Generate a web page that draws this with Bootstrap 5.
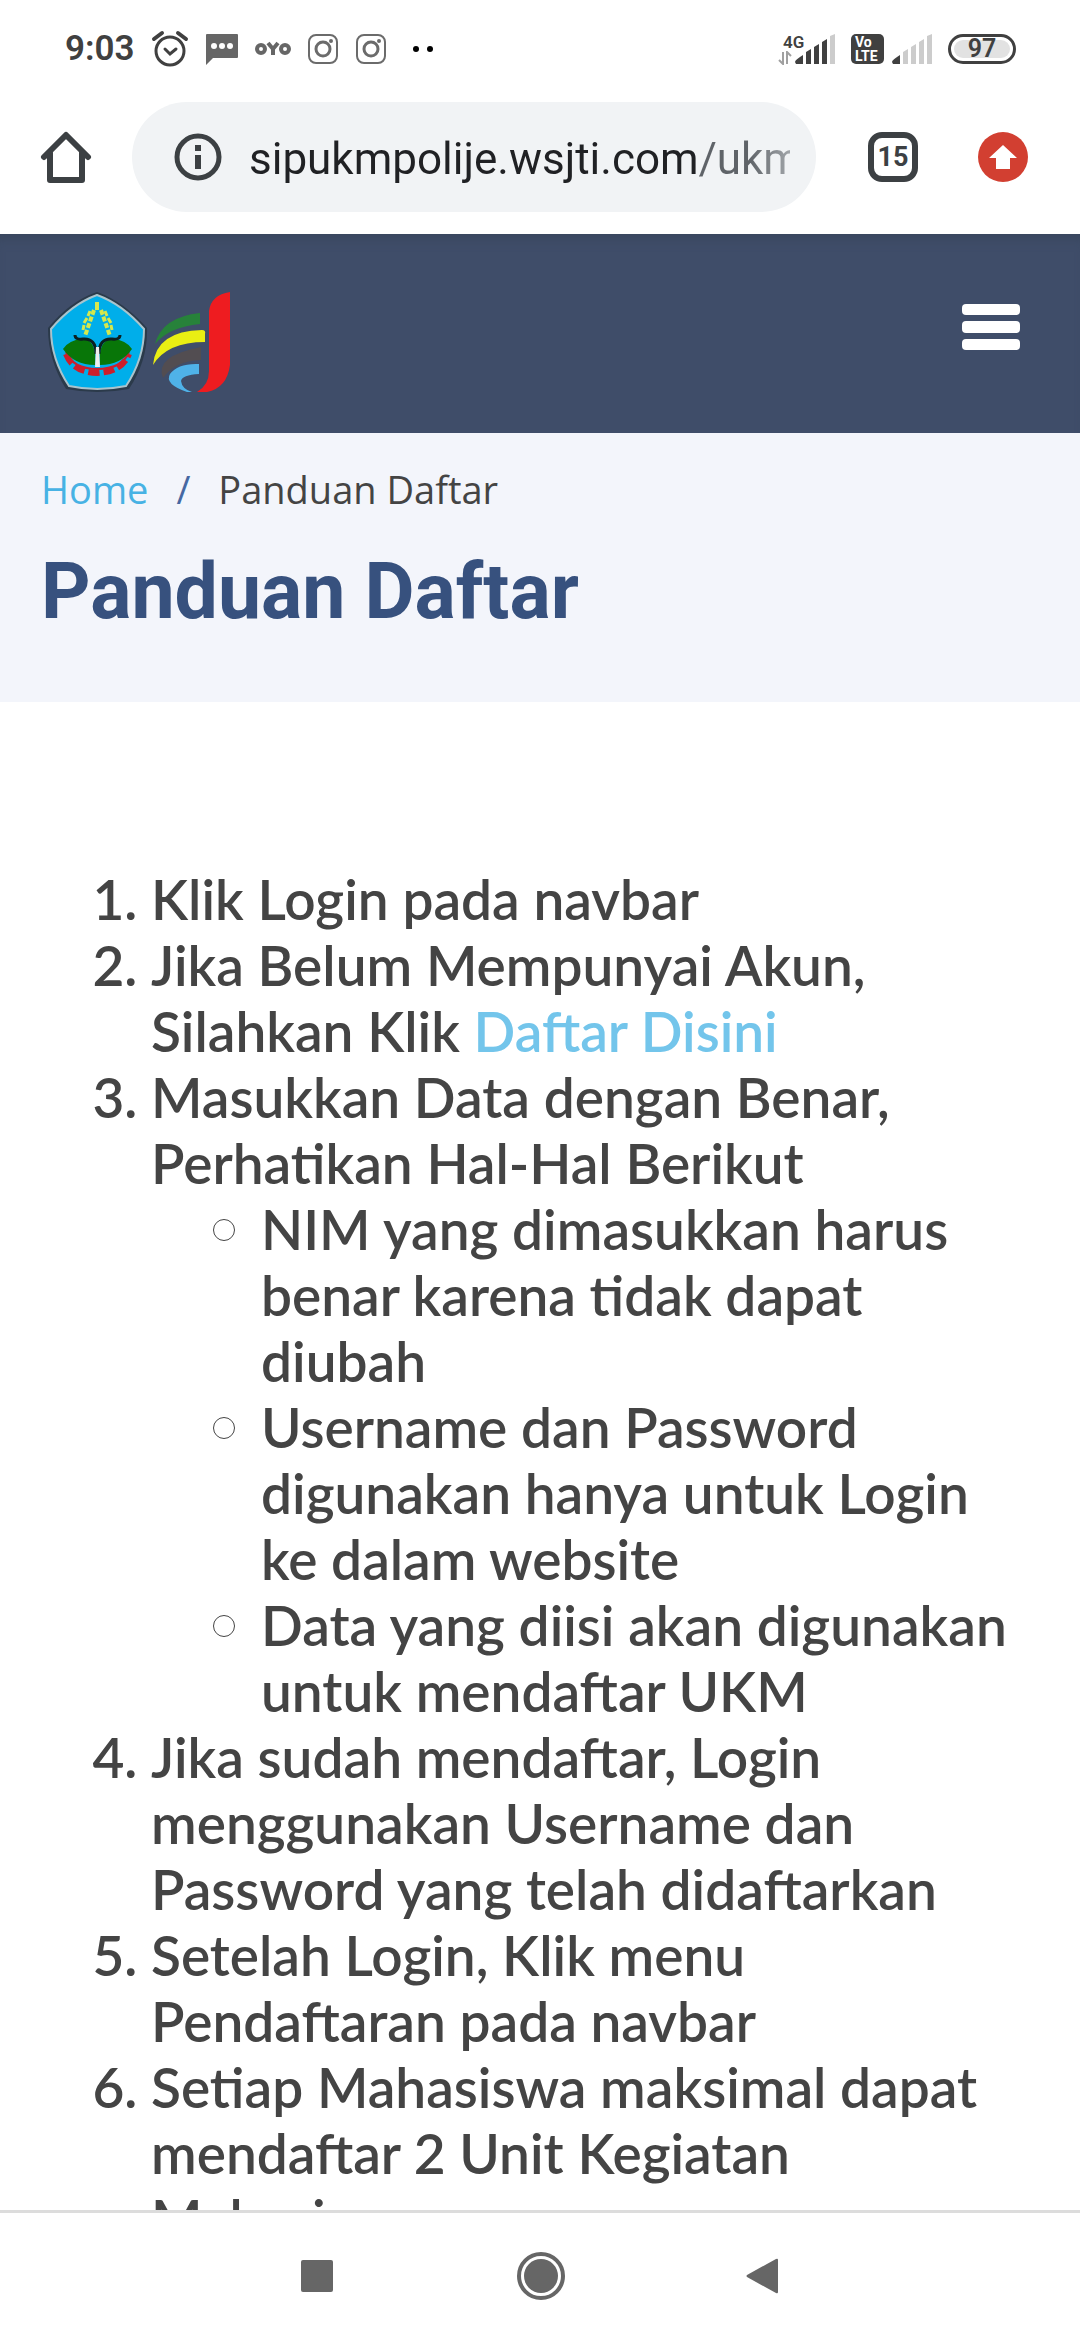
<!DOCTYPE html>
<html lang="id">
<head>
<meta charset="utf-8">
<meta name="viewport" content="width=device-width, initial-scale=1">
<title>Panduan Daftar</title>
<link rel="stylesheet" href="https://cdn.jsdelivr.net/npm/bootstrap@5.3.0/dist/css/bootstrap.min.css">
<style>
  body { background: #fff; color: #444; font-family: Roboto, "Liberation Sans", sans-serif; }
  svg { display: block; flex: none; }

  .status-bar { height: 98px; padding: 0 64px 0 65px; color: #404040; }
  .clock { font-size: 35px; line-height: 40px; font-weight: 600; }
  .net-label { font-size: 17px; line-height: 17px; font-weight: 600; margin-left: 5px; }
  .net-type { width: 17px; }
  .battery { width: 68px; height: 30px; border: 3px solid #404040; border-radius: 15px; padding: 3px; }
  .battery-level { background: #e2e2e2; border-radius: 9px; font-size: 25px; line-height: 18px; font-weight: 600; }

  .toolbar { padding: 4px 52px 22px 40px; }
  .tool-btn { background: none; border: 0; padding: 0; flex: none; }
  .address { height: 110px; border-radius: 55px; background: #f1f3f5; padding: 0 26px 0 42px; margin: 0 52px 0 40px; gap: 27px; min-width: 0; }
  .address input {
    border: 0; padding: 4px 0 0; outline: 0; width: 100%; min-width: 0; font-size: 44px; line-height: 56px; height: 64px;
    color: transparent; -webkit-background-clip: text; background-clip: text;
    background-image: linear-gradient(90deg, #202124 451px, #5f6368 451px, #5f6368 500px, #a0a4a8 540px);
  }
  .tabs-btn { width: 50px; height: 50px; border: 6px solid #3c4043; border-radius: 14px; color: #3c4043; font-size: 27px; line-height: 38px; font-weight: 700; margin-right: 60px; }

  .site-nav { background: #3f4d69; padding: 58px 60px 41px 48px; box-shadow: inset 0 12px 12px -8px #38455c; }
  .site-nav .menu-btn { margin-top: 12px; }
  .page-head { background: #f3f5fb; padding: 27px 41px 64px; }
  .crumbs { font-family: "Open Sans", sans-serif; font-size: 38px; line-height: 58px; --bs-breadcrumb-divider-color: #4668a2; --bs-breadcrumb-item-padding-x: 28px; --bs-breadcrumb-item-active-color: #444; --bs-breadcrumb-margin-bottom: 0; }
  .crumbs a { color: #47b2e4; text-decoration: none; }
  .page-head h1 { color: #37517e; font-size: 77px; line-height: 92px; font-weight: 700; margin: 28px 0 0; }

  .guide { padding: 164px 0 0 41px; }
  .guide ol, .guide ul { padding-left: 110px; margin: 0; }
  .guide > ol { font-family: Lato, sans-serif; font-size: 55px; line-height: 66px; font-weight: 600; }
  .guide a { color: #73c5eb; text-decoration: none; }
  .guide ul { list-style: none; }
  .guide ul > li::before { content: ""; float: left; width: 22px; height: 22px; margin: 23px 0 0 -48px; border: 1px solid #444; border-radius: 50%; }

  .sys-nav { height: 130px; border-top: 3px solid #dcdcdc; padding: 0 2px 2px 0; }
  .home-btn { margin: 0 180px 0 183px; }
</style>
</head>
<body>
<div class="vh-100 d-flex flex-column overflow-hidden">
  <header class="flex-shrink-0">
    <div class="status-bar d-flex align-items-center justify-content-between">
      <div class="d-flex align-items-center">
        <span class="clock">9:03</span>
        <svg class="ms-3" width="38" height="38" viewBox="0 0 38 38" fill="none" stroke="#404040" stroke-width="3" stroke-linecap="round"><circle cx="19" cy="21" r="14"/><path d="M3 9l8-6M35 9l-8-6" stroke-width="4"/><path d="M14 19l5 5 6-5"/></svg>
        <svg class="ms-3" width="34" height="34" viewBox="0 0 34 34"><path d="M2 2h30q1 0 1 1v22q0 1-1 1H8l-7 7V3q0-1 1-1z" fill="#666"/><g fill="#fff"><circle cx="9" cy="14" r="3"/><circle cx="17" cy="14" r="3"/><circle cx="25" cy="14" r="3"/></g></svg>
        <svg class="ms-3" width="36" height="16" viewBox="0 0 36 16" fill="none" stroke="#666" stroke-width="4"><circle cx="6" cy="8" r="4"/><circle cx="30" cy="8" r="4"/><path d="M13 2l5 6 5-6M18 7v7"/></svg>
        <svg class="ms-3" width="32" height="32" viewBox="0 0 32 32" fill="none" stroke="#6b6b6b" stroke-width="2"><rect x="2" y="2" width="28" height="28" rx="7"/><circle cx="16" cy="16" r="7" stroke-width="3"/><circle cx="24" cy="8" r="1"/></svg>
        <svg class="ms-3" width="32" height="32" viewBox="0 0 32 32" fill="none" stroke="#6b6b6b" stroke-width="2"><rect x="2" y="2" width="28" height="28" rx="7"/><circle cx="16" cy="16" r="7" stroke-width="3"/><circle cx="24" cy="8" r="1"/></svg>
        <svg class="ms-4" width="28" height="10" viewBox="0 0 28 10"><circle cx="5" cy="5" r="3"/><circle cx="19" cy="5" r="3"/></svg>
      </div>
      <div class="d-flex align-items-center">
        <div class="net-type d-flex flex-column">
          <span class="net-label">4G</span>
          <svg width="14" height="14" viewBox="0 0 14 14" fill="none" stroke="#a0a0a0" stroke-width="2"><path d="M5 1v12L1 9M9 13V1l4 4"/></svg>
        </div>
        <svg width="40" height="30" viewBox="0 0 40 30" fill="#404040"><path d="M0 28q0-2 8-7v9H1zM11 18l5-3v15h-5zM19 13l5-3v20h-5zM27 8l5-3v25h-5z"/><path fill="#ccc" d="M35 2l5-2v30h-5z"/></svg>
        <svg class="ms-3 me-2" width="33" height="30" viewBox="0 0 33 30"><rect width="33" height="30" rx="5" fill="#404040"/><text x="4" y="13" font-size="14" font-weight="700" fill="#fff" font-family="Roboto">Vo</text><text x="4" y="27" font-size="14" font-weight="700" fill="#fff" font-family="Roboto">LTE</text></svg>
        <svg width="40" height="30" viewBox="0 0 40 30" fill="#ccc"><path fill="#404040" d="M0 28q0-2 8-7v9H1z"/><path d="M11 18l5-3v15h-5zM19 13l5-3v20h-5zM27 8l5-3v25h-5zM35 2l5-2v30h-5z"/></svg>
        <div class="battery ms-3"><div class="battery-level text-center">97</div></div>
      </div>
    </div>

    <div class="toolbar d-flex align-items-center">
      <button class="tool-btn" type="button" aria-label="Home"><svg width="52" height="52" viewBox="0 0 52 52" fill="none" stroke="#3c4043" stroke-width="6" stroke-linecap="round" stroke-linejoin="round"><path d="M4 26L26 4l22 22"/><path d="M10 22v27h32V22"/></svg></button>
      <div class="address d-flex align-items-center flex-grow-1">
        <svg width="48" height="48" viewBox="0 0 48 48"><circle cx="24" cy="24" r="21" fill="none" stroke="#3c4043" stroke-width="5"/><path fill="#3c4043" d="M21 12h6v6h-6zM21 22h6v14h-6z"/></svg>
        <input type="text" aria-label="Address" value="sipukmpolije.wsjti.com/ukm">
      </div>
      <button class="tool-btn tabs-btn" type="button" aria-label="15 tabs">15</button>
      <button class="tool-btn" type="button" aria-label="Update"><svg width="50" height="50" viewBox="0 0 50 50"><circle cx="25" cy="25" r="25" fill="#d23f31"/><path fill="#fff" d="M25 13l14 13h-7v11H18V26h-7z"/></svg></button>
    </div>
  </header>

  <main class="flex-grow-1 overflow-hidden">
    <nav class="site-nav d-flex justify-content-between align-items-start">
      <a href="#" aria-label="Beranda">
        <svg width="184" height="100" viewBox="0 0 184 100">
          <path d="M49 0Q75 9 99 36Q100 68 81 97Q49 103 18 97Q0 68 0 36Q22 9 49 0z" fill="#2b3a4a"/>
          <path d="M49 3Q74 12 96 37Q96 67 78 94Q49 100 21 94Q3 67 3 37Q24 12 49 3z" fill="#00aeea" stroke="#a9c4cd" stroke-width="2"/>
          <path d="M49 10v8" stroke="#d5e84d" stroke-width="4"/>
          <path d="M46 18l-9 26M53 18l9 26" stroke="#d5e84d" stroke-width="4" stroke-dasharray="5 2" fill="none"/>
          <path d="M42 19l-2 5M39 26l-3 5M36 33l-1 5M57 19l2 5M60 26l3 5M63 33l1 5" stroke="#d5e84d" stroke-width="3"/>
          <path d="M18 62Q25 80 49 81Q74 80 81 62" fill="none" stroke="#cc1e2b" stroke-width="6" stroke-dasharray="11 4"/>
          <path d="M18 60Q25 77 49 77Q74 77 81 60" fill="none" stroke="#cc1e2b" stroke-width="2"/>
          <path d="M15 57Q23 45 40 48Q49 54 47 73Q26 73 15 57zM84 57Q76 45 59 48Q50 54 52 73Q73 73 84 57z" fill="#087608"/>
          <path d="M27 43q0 5 8 4q13-1 13 15M72 43q0 5-8 4q-13-1-13 15" fill="none" stroke="#0c2020" stroke-width="3"/>
          <path d="M48 55h3l1 20h-5z" fill="#eee"/>
          <path d="M107 52Q114 25 152 21v11Q121 35 107 52z" fill="#27823a"/>
          <path d="M105 73Q108 39 154 38q4 0 3 4v8Q119 50 105 73z" fill="#e9ee13"/>
          <path d="M115 86Q106 64 153 55v13Q127 69 115 86z" fill="#524d51"/>
          <path d="M139 100Q116 92 122 82Q130 71 151 72v10Q134 83 133 89Q134 97 144 100z" fill="#4fb2e8"/>
          <path d="M182 0v73Q179 96 159 100h-10Q161 93 161 79V19Q163 3 182 0z" fill="#ee1c20"/>
        </svg>
      </a>
      <button class="tool-btn menu-btn" type="button" aria-label="Menu"><svg width="58" height="46" viewBox="0 0 58 46" fill="#fff"><rect width="58" height="11" rx="4"/><rect y="17" width="58" height="12" rx="4"/><rect y="35" width="58" height="11" rx="4"/></svg></button>
    </nav>

    <section class="page-head">
      <nav aria-label="breadcrumb">
        <ol class="breadcrumb crumbs">
          <li class="breadcrumb-item"><a href="#">Home</a></li>
          <li class="breadcrumb-item active" aria-current="page">Panduan Daftar</li>
        </ol>
      </nav>
      <h1>Panduan Daftar</h1>
    </section>

    <section class="guide">
      <ol>
        <li>Klik Login pada navbar</li>
        <li>Jika Belum Mempunyai Akun,<br>Silahkan Klik <a href="#">Daftar Disini</a></li>
        <li>Masukkan Data dengan Benar,<br>Perhatikan Hal-Hal Berikut
          <ul>
            <li>NIM yang dimasukkan harus<br>benar karena tidak dapat<br>diubah</li>
            <li>Username dan Password<br>digunakan hanya untuk Login<br>ke dalam website</li>
            <li>Data yang diisi akan digunakan<br>untuk mendaftar UKM</li>
          </ul>
        </li>
        <li>Jika sudah mendaftar, Login<br>menggunakan Username dan<br>Password yang telah didaftarkan</li>
        <li>Setelah Login, Klik menu<br>Pendaftaran pada navbar</li>
        <li>Setiap Mahasiswa maksimal dapat<br>mendaftar 2 Unit Kegiatan<br>Mahasiswa</li>
      </ol>
    </section>
  </main>

  <footer class="sys-nav flex-shrink-0 d-flex align-items-center justify-content-center">
    <button class="tool-btn" type="button" aria-label="Recent apps"><svg width="32" height="32" viewBox="0 0 32 32"><rect width="32" height="32" rx="2" fill="#666"/></svg></button>
    <button class="tool-btn home-btn" type="button" aria-label="Home screen"><svg width="50" height="50" viewBox="0 0 50 50"><circle cx="25" cy="25" r="22" fill="none" stroke="#666" stroke-width="4"/><circle cx="25" cy="25" r="17" fill="#666"/></svg></button>
    <button class="tool-btn" type="button" aria-label="Back"><svg width="32" height="36" viewBox="0 0 32 36"><path d="M30 1q2-1 2 1v32q0 2-2 1L1 19q-1-1 0-2z" fill="#666"/></svg></button>
  </footer>
</div>
<script src="https://cdn.jsdelivr.net/npm/bootstrap@5.3.0/dist/js/bootstrap.bundle.min.js"></script>
</body>
</html>
